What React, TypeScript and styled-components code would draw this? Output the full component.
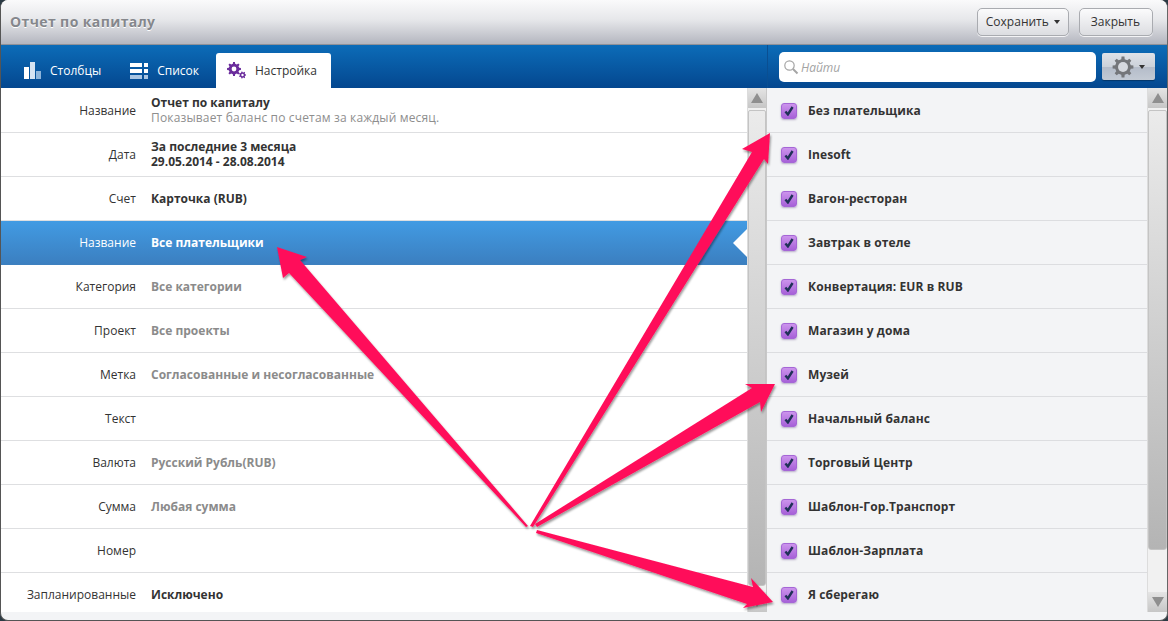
import React from 'react';
import styled, { createGlobalStyle } from 'styled-components';

const Global = createGlobalStyle`
  html, body { margin: 0; padding: 0; background: #2b3a44; overflow: hidden; }
  * { box-sizing: border-box; }
`;

const Frame = styled.div`
  position: relative;
  width: 1168px;
  height: 621px;
  overflow: hidden;
  background: #f3f4f6;
  border-radius: 8px;
  border-left: 1px solid #555;
  border-right: 1px solid #666;
  border-bottom: 1px solid #555;
  font-family: "Open Sans", "Noto Sans", sans-serif;
  font-size: 12px;
  color: #333;
  display: flex;
  flex-direction: column;
`;

const TitleBar = styled.header`
  height: 45px;
  flex: none;
  display: flex;
  align-items: center;
  justify-content: space-between;
  padding: 0 14px 1px 9px;
  background: linear-gradient(#fafafb 0%, #e6e7ea 45%, #b4b6bf 100%);
  border-bottom: 1px solid #8f9198;
`;

const Title = styled.h1`
  margin: 0;
  font-size: 14px;
  font-weight: 700;
  letter-spacing: 0.4px;
  color: #85878c;
  text-shadow: 0 1px 0 #fff;
`;

const Actions = styled.div`
  display: flex;
  gap: 10px;
`;

const Button = styled.button<{ $caret?: boolean }>`
  height: 28px;
  padding: 0 ${p => (p.$caret ? '8px' : '12px')} 0 ${p => (p.$caret ? '8px' : '11px')};
  display: flex;
  align-items: center;
  gap: 5px;
  border: 1px solid #a9abb0;
  border-radius: 5px;
  background: linear-gradient(#fbfbfc, #dcdde1);
  box-shadow: 0 1px 0 #f4f4f6;
  font: 12px "Open Sans", sans-serif;
  color: #333;
`;

const Caret = styled.span`
  display: inline-block;
  border-left: 3.5px solid transparent;
  border-right: 3.5px solid transparent;
  border-top: 4px solid #333;
`;

const TabBar = styled.div`
  height: 43px;
  flex: none;
  display: flex;
  background: linear-gradient(#0c6cb8, #04478f);
`;

const Tabs = styled.nav`
  width: 767px;
  flex: none;
  display: flex;
  align-items: flex-end;
  padding-left: 8px;
  border-right: 1px solid #0a4f92;
`;

const Tab = styled.div<{ $active?: boolean; $left: number; $right: number }>`
  height: 35px;
  display: flex;
  align-items: center;
  gap: 9px;
  padding: 0 ${p => p.$right}px 0 ${p => p.$left}px;
  border-radius: 3px 3px 0 0;
  background: ${p => (p.$active ? '#fff' : 'transparent')};
  color: ${p => (p.$active ? '#333' : '#fff')};
  & > svg { flex: none; }
`;

const SearchTools = styled.div`
  flex: 1;
  display: flex;
  align-items: flex-start;
  padding: 7px 10px 0 11px;
  gap: 6px;
`;

const Search = styled.div`
  width: 317px;
  height: 30px;
  border-radius: 5px;
  background: #fff;
  display: flex;
  align-items: center;
  gap: 2px;
  padding-left: 4px;
  font-style: italic;
  font-size: 12px;
  color: #a3a3a3;
`;

const GearButton = styled.div`
  width: 53px;
  height: 27px;
  margin-top: 1px;
  border-radius: 2px;
  background: linear-gradient(#dfe2e8 0%, #ccd2da 50%, #b4bcc9 52%, #c3cad4 100%);
  box-shadow: 0 1px 1px rgba(0,0,0,.3);
  display: flex;
  align-items: center;
  justify-content: center;
  gap: 5px;
`;

const Body = styled.main`
  flex: 1;
  min-height: 0;
  display: flex;
`;

const LeftPane = styled.section`
  width: 746px;
  flex: none;
  height: 524px;
  padding-top: 1px;
  overflow: hidden;
  background: #fff;
`;

const Row = styled.div<{ $selected?: boolean }>`
  position: relative;
  height: 44px;
  display: grid;
  grid-template-columns: 135px 1fr;
  column-gap: 15px;
  align-items: center;
  border-bottom: 1px solid ${p => (p.$selected ? '#3d80bf' : '#dedfe1')};
  background: ${p => (p.$selected ? 'linear-gradient(#429be3, #3b7fc0)' : 'transparent')};
  color: ${p => (p.$selected ? '#fff' : '#333')};
`;

const Label = styled.span`
  text-align: right;
  line-height: 14px;
`;

const Value = styled.div<{ $muted?: boolean; $selected?: boolean; $multi?: boolean }>`
  font-weight: 700;
  line-height: 15px;
  margin-bottom: ${p => (p.$multi ? '2px' : '0')};
  color: ${p => (p.$selected ? '#fff' : p.$muted ? '#8b8b8b' : '#333')};
`;

const Sub = styled.div`
  font-weight: 400;
  letter-spacing: 0.16px;
  color: #8e8e8e;
`;

const Notch = styled.span`
  position: absolute;
  right: 0;
  top: 8px;
  width: 0;
  height: 0;
  border-top: 14px solid transparent;
  border-bottom: 14px solid transparent;
  border-right: 14px solid #fff;
`;

const Scroll = styled.div<{ $divider?: boolean }>`
  width: 20px;
  flex: none;
  height: 524px;
  display: flex;
  flex-direction: column;
  background: #f1f1f1;
  border-left: 1px solid #dcdcdc;
  border-right: ${p => (p.$divider ? '1px solid #c8c8c8' : '0')};
`;

const ScrollBtn = styled.div<{ $bottom?: boolean }>`
  height: 20px;
  flex: none;
  display: flex;
  align-items: center;
  justify-content: center;
  background: linear-gradient(#e4e4e4, #c6c6c6);
  margin-top: ${p => (p.$bottom ? 'auto' : '0')};
  &::after {
    content: '';
    border-left: 6px solid transparent;
    border-right: 6px solid transparent;
    ${p => (p.$bottom ? 'border-top: 10px solid #8f8f8f;' : 'border-bottom: 10px solid #8f8f8f;')}
  }
`;

const Thumb = styled.div<{ $h: number }>`
  height: ${p => p.$h}px;
  margin-top: 2px;
  flex: none;
  border-radius: 2px 2px 3px 3px;
  background: linear-gradient(#ebebeb, #b4b4b4);
  border: 1px solid #c4c4c4;
`;

const RightPane = styled.section`
  flex: 1;
  height: 524px;
  padding-top: 1px;
  overflow: hidden;
  background: #f3f4f6;
`;

const CheckRow = styled.div`
  height: 44px;
  display: flex;
  align-items: center;
  gap: 11px;
  padding-left: 14px;
  border-bottom: 1px solid #dcdde0;
  font-weight: 700;
  letter-spacing: 0.1px;
  color: #333;
`;

const Box = styled.span`
  width: 16px;
  height: 16px;
  flex: none;
  border-radius: 3px;
  border: 1px solid #a566d6;
  background: linear-gradient(#cc94ec, #a761d8);
  box-shadow: 0 1px 2px rgba(90,60,130,.4);
  display: flex;
  align-items: center;
  justify-content: center;
`;

const Overlay = styled.svg`
  position: absolute;
  left: -1px;
  top: 0;
  pointer-events: none;
`;

const Bars = () => (
  <svg width="17" height="17" viewBox="0 0 17 17">
    <rect x="0" y="5" width="5" height="12" fill="#fff" />
    <rect x="6" y="0" width="5" height="17" fill="#d5e3f2" />
    <rect x="12" y="9" width="5" height="8" fill="#8db4da" />
  </svg>
);

const ListIcon = () => (
  <svg width="18" height="16" viewBox="0 0 18 16">
    <rect x="0" y="0" width="12" height="4" fill="#fff" />
    <rect x="14" y="0" width="4" height="4" fill="#fff" />
    <rect x="0" y="6" width="12" height="4" fill="#fff" />
    <rect x="14" y="6" width="4" height="4" fill="#fff" />
    <rect x="0" y="12" width="12" height="4" fill="#a9c5e3" />
    <rect x="14" y="12" width="4" height="4" fill="#a9c5e3" />
  </svg>
);

const gearPath = (cx: number, cy: number, r: number, teeth: number) => {
  const o = r, i = r * 0.76;
  let d = '';
  for (let k = 0; k < teeth; k++) {
    const a = (k / teeth) * Math.PI * 2;
    const w = Math.PI / teeth / 2;
    const pts = [[i, a - w * 1.1], [o, a - w * 0.7], [o, a + w * 0.7], [i, a + w * 1.1]];
    pts.forEach(([rr, t], n) => {
      d += `${k === 0 && n === 0 ? 'M' : 'L'}${(cx + rr * Math.cos(t)).toFixed(2)} ${(cy + rr * Math.sin(t)).toFixed(2)}`;
    });
  }
  return d + 'Z';
};

const Gears = () => (
  <svg width="19" height="17" viewBox="0 0 19 17">
    <path d={gearPath(7, 7, 7, 8)} fill="#6b2d9c" />
    <circle cx="7" cy="7" r="2.4" fill="#fff" />
    <path d={gearPath(15.5, 13, 3.6, 7)} fill="#6b2d9c" />
    <circle cx="15.5" cy="13" r="1.2" fill="#fff" />
  </svg>
);

const BigGear = () => (
  <svg width="22" height="22" viewBox="0 0 22 22">
    <path d={gearPath(11, 11, 10.5, 8)} fill="#74767a" />
    <circle cx="11" cy="11" r="5" fill="#d6d9df" />
  </svg>
);

const Magnifier = () => (
  <svg width="16" height="16" viewBox="0 0 16 16" fill="none" stroke="#a5a5a5">
    <circle cx="6.5" cy="6.5" r="4.7" strokeWidth="1.2" />
    <path d="M10 10l4.5 4.5" strokeWidth="2" />
  </svg>
);

const Tick = () => (
  <svg width="10" height="10" viewBox="0 0 10 10">
    <path d="M1.4 5.4 L3.9 8.4 L8.6 1" fill="none" stroke="#1f3157" strokeWidth="2.4" />
  </svg>
);

const rows: { label: string; value?: string; second?: string; sub?: string; muted?: boolean; selected?: boolean }[] = [
  { label: 'Название', value: 'Отчет по капиталу', sub: 'Показывает баланс по счетам за каждый месяц.' },
  { label: 'Дата', value: 'За последние 3 месяца', second: '29.05.2014 - 28.08.2014' },
  { label: 'Счет', value: 'Карточка (RUB)' },
  { label: 'Название', value: 'Все плательщики', selected: true },
  { label: 'Категория', value: 'Все категории', muted: true },
  { label: 'Проект', value: 'Все проекты', muted: true },
  { label: 'Метка', value: 'Согласованные и несогласованные', muted: true },
  { label: 'Текст' },
  { label: 'Валюта', value: 'Русский Рубль(RUB)', muted: true },
  { label: 'Сумма', value: 'Любая сумма', muted: true },
  { label: 'Номер' },
  { label: 'Запланированные', value: 'Исключено' },
];

const payers = [
  'Без плательщика', 'Inesoft', 'Вагон-ресторан', 'Завтрак в отеле', 'Конвертация: EUR в RUB',
  'Магазин у дома', 'Музей', 'Начальный баланс', 'Торговый Центр', 'Шаблон-Гор.Транспорт',
  'Шаблон-Зарплата', 'Я сберегаю',
];

const arrows = [
  '277,247 307,257 300,260 528,526 526,527 289,273 283,278',
  '770,133 768,164 764,159 533,527 530,526 752,152 742,149',
  '775,384 761,412 760,402 537,527 535,524 752,388 745,384',
  '773,602 743,608 747,604 536,533 537,530 753,587 751,578',
];

export default function App() {
  return (
    <Frame>
      <Global />
      <TitleBar>
        <Title>Отчет по капиталу</Title>
        <Actions>
          <Button $caret>Сохранить<Caret /></Button>
          <Button>Закрыть</Button>
        </Actions>
      </TitleBar>
      <TabBar>
        <Tabs>
          <Tab $left={15} $right={15}><Bars />Столбцы</Tab>
          <Tab $left={14} $right={17}><ListIcon />Список</Tab>
          <Tab $active $left={11} $right={14}><Gears />Настройка</Tab>
        </Tabs>
        <SearchTools>
          <Search><Magnifier />Найти</Search>
          <GearButton><BigGear /><Caret /></GearButton>
        </SearchTools>
      </TabBar>
      <Body>
        <LeftPane>
          {rows.map((r, i) => (
            <Row key={i} $selected={r.selected}>
              <Label>{r.label}</Label>
              <Value $muted={r.muted} $selected={r.selected} $multi={!!(r.second || r.sub)}>
                {r.value}
                {r.second && <div>{r.second}</div>}
                {r.sub && <Sub>{r.sub}</Sub>}
              </Value>
              {r.selected && <Notch />}
            </Row>
          ))}
        </LeftPane>
        <Scroll $divider>
          <ScrollBtn />
          <Thumb $h={476} />
          <ScrollBtn $bottom />
        </Scroll>
        <RightPane>
          {payers.map(p => (
            <CheckRow key={p}>
              <Box><Tick /></Box>
              {p}
            </CheckRow>
          ))}
        </RightPane>
        <Scroll>
          <ScrollBtn />
          <Thumb $h={440} />
          <ScrollBtn $bottom />
        </Scroll>
      </Body>
      <Overlay width="1168" height="621" viewBox="0 0 1168 621">
        <defs>
          <filter id="shadow" x="-10%" y="-10%" width="120%" height="120%">
            <feDropShadow dx="1" dy="2" stdDeviation="1" floodColor="#000" floodOpacity="0.4" />
          </filter>
        </defs>
        <g filter="url(#shadow)">
          {arrows.map(a => <polygon key={a} points={a} fill="#ff0f5a" />)}
        </g>
      </Overlay>
    </Frame>
  );
}
